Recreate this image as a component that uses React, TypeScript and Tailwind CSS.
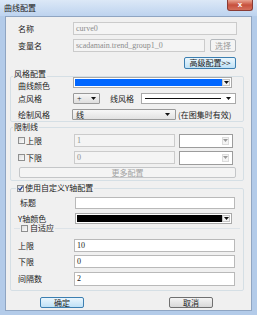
const cjk = "font-['Noto_Sans_CJK_SC',sans-serif]"
const latin = "font-['Liberation_Serif','Noto_Sans_CJK_SC',serif]"

function Arrow({ gray }: { gray?: boolean }) {
  return (
    <svg width="5" height="3" viewBox="0 0 5 3" className="shrink-0">
      <path d="M0 0h5L2.5 3z" fill={gray ? '#9a9a9a' : '#111'} />
    </svg>
  )
}

function Check({ checked }: { checked?: boolean }) {
  return (
    <span className="w-[7px] h-[7px] shrink-0 border border-[#8e8f8f] bg-linear-to-br from-[#dedede] to-[#fbfbfb] flex items-center justify-center">
      {checked && (
        <svg width="5" height="5" viewBox="0 0 5 5">
          <path d="M0.4 2.4L2 4.2L4.6 0.4" stroke="#233f91" strokeWidth="1.2" fill="none" />
        </svg>
      )}
    </span>
  )
}

function Field({ className, value, disabled }: { className: string; value?: string; disabled?: boolean }) {
  const look = disabled
    ? 'border-[#cbcbcb] bg-[#f4f4f4] text-[#8c8c8c]'
    : 'border-[#b9b9b9] bg-white text-[#222]'
  return (
    <div className={`${className} h-full shrink-0 border ${look} ${latin} text-[8px] leading-[9px] pl-[2px] pt-[1px]`}>
      {value}
    </div>
  )
}

function ColorCombo({ color, className }: { color: string; className: string }) {
  return (
    <div className={`${className} h-full shrink-0 border border-[#a9a9a9] bg-white flex p-[1px]`}>
      <div className={`flex-1 ${color}`} />
      <div className="w-[8px] border border-[#c4c4c4] bg-[#f2f2f2] flex items-center justify-center">
        <Arrow />
      </div>
    </div>
  )
}

function DisabledCombo() {
  return (
    <div className="ml-[4px] w-[54px] h-[14px] shrink-0 border border-[#9c9c9c] bg-white flex items-center justify-end pr-[3px]">
      <div className="w-[7px] h-[8px] border border-[#dcdcdc] bg-[#f4f4f4] flex items-center justify-center">
        <Arrow gray />
      </div>
    </div>
  )
}

export default function App() {
  return (
    <div className={`w-[257px] h-[315px] bg-[#b3cbe9] flex flex-col overflow-hidden ${cjk} text-[8px] leading-[10px] text-[#222]`}>
      <div className="h-[16px] shrink-0 flex items-start bg-linear-to-b from-[#dce8f7] to-[#bdd3ef]">
        <span className="pl-[4px] pt-[3px] leading-[9px] text-[#1a1a1a]">曲线配置</span>
        <div className="ml-auto mr-[4px] w-[26px] h-[11px] rounded-b-[3px] border border-t-0 border-[#8a3b34] bg-linear-to-b from-[#e8a391] via-[#c7503d] to-[#d4705c] flex items-center justify-center text-white font-bold leading-none text-[8px] font-['Liberation_Sans',sans-serif]">
          x
        </div>
      </div>

      <div className="flex-1 mx-[5px] mb-[4px] bg-[#f0f0f0] border border-[#8fa5c2] flex flex-col">
        <div className="mt-[5px] h-[13px] flex items-center pl-[12px]">
          <span className="w-[55px] shrink-0">名称</span>
          <Field className="w-[164px]" value="curve0" disabled />
        </div>
        <div className="mt-[4px] h-[13px] flex items-center pl-[12px]">
          <span className="w-[55px] shrink-0">变量名</span>
          <Field className="w-[132px]" value="scadamain.trend_group1_0" disabled />
          <div className="ml-[5px] w-[26px] h-full border border-[#b5b9bd] rounded-[2px] bg-[#f4f4f4] text-[#9a9a9a] flex items-center justify-center">
            选择
          </div>
        </div>
        <div className="mt-[5px] h-[12px] pl-[178px]">
          <div className="w-[52px] h-full border border-[#3c7fb1] rounded-[2px] bg-linear-to-b from-[#eaf6fd] to-[#bfe1f6] flex items-center justify-center leading-none">
            高级配置&gt;&gt;
          </div>
        </div>

        <fieldset className="mt-[1px] ml-[4px] w-[234px] border border-[#d5dfe5] rounded-[2px] pb-[1px]">
          <legend className="ml-[2px] px-[1px] leading-[8px] pb-[4px]">风格配置</legend>
          <div className="-mt-[5px] h-[11px] flex items-start pl-[7px]">
            <span className="w-[55px] shrink-0 pt-[5px] leading-[8px]">曲线颜色</span>
            <ColorCombo className="w-[159px]" color="bg-[#0066ff]" />
          </div>
          <div className="mt-[5px] h-[11px] flex items-center pl-[7px]">
            <span className="w-[55px] shrink-0">点风格</span>
            <div className="w-[27px] h-full border border-[#9a9a9a] rounded-[1px] bg-linear-to-b from-[#f7f7f7] to-[#dedede] flex items-center justify-between px-[3px]">
              <span className={`${latin} leading-none`}>+</span>
              <Arrow />
            </div>
            <span className="ml-[10px] w-[31px] shrink-0">线风格</span>
            <div className="w-[95px] h-full border border-[#a9a9a9] bg-white flex items-center pl-[3px] pr-[4px] gap-[5px]">
              <div className="flex-1 h-px bg-[#111]" />
              <Arrow />
            </div>
          </div>
          <div className="mt-[5px] h-[11px] flex items-center pl-[7px]">
            <span className="w-[54px] shrink-0">绘制风格</span>
            <div className="w-[104px] h-full border border-[#9a9a9a] rounded-[1px] bg-linear-to-b from-[#f7f7f7] to-[#e2e2e2] flex items-center justify-between pl-[3px] pr-[5px]">
              <span className="leading-none">线</span>
              <Arrow />
            </div>
            <span className="ml-[2px] whitespace-nowrap">(在图集时有效)</span>
          </div>
        </fieldset>

        <fieldset className="mt-[1px] ml-[4px] w-[234px] border border-[#d5dfe5] rounded-[2px] pb-[2px]">
          <legend className="ml-[2px] px-[1px] leading-[8px]">限制线</legend>
          <div className="mt-[3px] h-[13px] flex items-center pl-[7px]">
            <Check />
            <span className="ml-[1px] w-[48px] shrink-0">上限</span>
            <Field className="w-[101px]" value="1" disabled />
            <DisabledCombo />
          </div>
          <div className="mt-[4px] h-[13px] flex items-center pl-[7px]">
            <Check />
            <span className="ml-[1px] w-[48px] shrink-0">下限</span>
            <Field className="w-[101px]" value="0" disabled />
            <DisabledCombo />
          </div>
          <div className="mt-[3px] ml-[8px] w-[217px] h-[11px] border border-[#c4c6c8] rounded-[2px] bg-[#f4f4f4] text-[#a2a2a2] flex items-center justify-center">
            更多配置
          </div>
        </fieldset>

        <fieldset className="mt-[3px] ml-[4px] w-[234px] border border-[#d5dfe5] rounded-[2px] pb-[4px]">
          <legend className="ml-[5px] px-[1px] leading-[8px]">
            <span className="flex items-center gap-[1px]">
              <Check checked />
              使用自定义Y轴配置
            </span>
          </legend>
          <div className="mt-[5px] h-[12px] flex items-center pl-[9px]">
            <span className="w-[55px] shrink-0">标题</span>
            <Field className="w-[160px]" />
          </div>
          <div className="mt-[4px] h-[11px] flex items-center pl-[7px]">
            <span className="w-[57px] shrink-0">Y轴颜色</span>
            <ColorCombo className="w-[157px]" color="bg-black" />
          </div>
          <fieldset className="ml-[3px] w-[226px] border-0 border-t border-[#dde3e8]">
            <legend className="ml-[6px] px-[1px] leading-[8px]">
              <span className="flex items-center gap-[2px]">
                <Check />
                自适应
              </span>
            </legend>
            <div className="mt-[7px] h-[13px] flex items-center pl-[4px]">
              <span className="w-[56px] shrink-0">上限</span>
              <Field className="w-[161px]" value="10" />
            </div>
            <div className="mt-[3px] h-[13px] flex items-center pl-[4px]">
              <span className="w-[56px] shrink-0">下限</span>
              <Field className="w-[161px]" value="0" />
            </div>
            <div className="mt-[4px] h-[14px] flex items-center pl-[4px]">
              <span className="w-[56px] shrink-0">间隔数</span>
              <Field className="w-[161px]" value="2" />
            </div>
          </fieldset>
        </fieldset>

        <div className="mt-[6px] h-[11px] flex pl-[34px]">
          <div className="w-[44px] h-full border border-[#3c7fb1] rounded-[2px] bg-linear-to-b from-[#eaf6fd] to-[#bfe1f6] flex items-center justify-center leading-none">
            确定
          </div>
          <div className="ml-[85px] w-[44px] h-full border border-[#707070] rounded-[2px] bg-linear-to-b from-[#f4f4f4] to-[#d8d8d8] flex items-center justify-center leading-none">
            取消
          </div>
        </div>
      </div>
    </div>
  )
}
